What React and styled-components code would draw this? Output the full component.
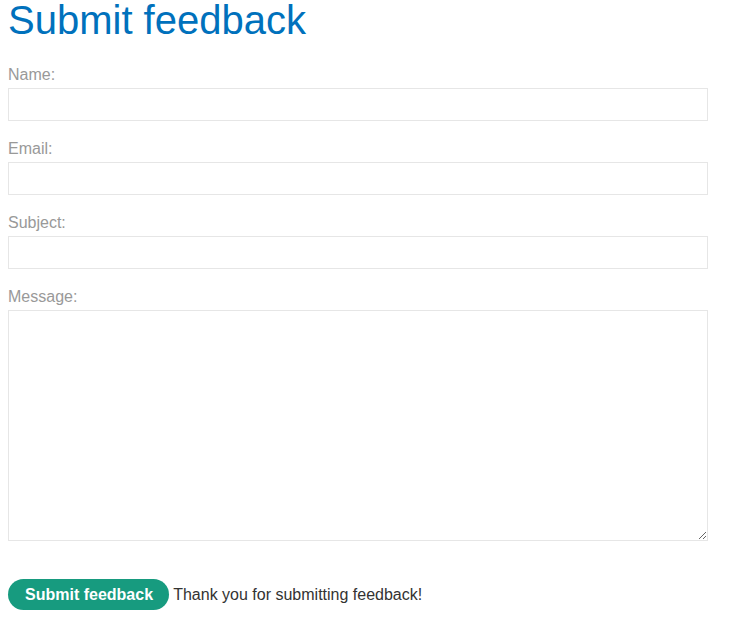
import React from "react";
import styled, { createGlobalStyle } from "styled-components";

const GlobalStyle = createGlobalStyle`
  body {
    margin: 0;
    padding: 0 8px;
    font-family: "Liberation Sans", Arial, sans-serif;
    background: #fff;
  }
`;

const Page = styled.main`
  width: 700px;
`;

const Heading = styled.h1`
  margin: -3px 0 23px 0;
  font-size: 40px;
  line-height: 46px;
  font-weight: 400;
  color: #0071bc;
`;

const Form = styled.form`
  display: flex;
  flex-direction: column;
`;

const Label = styled.label`
  display: block;
  font-size: 16px;
  line-height: 18px;
  color: #999;
  margin-bottom: 4px;
`;

const Input = styled.input`
  box-sizing: border-box;
  display: block;
  width: 700px;
  height: 33px;
  margin: 0 0 19px 0;
  border: 1px solid #e6e6e6;
  background: #fff;
  font-family: inherit;
  font-size: 16px;
  outline: none;
`;

const TextArea = styled.textarea`
  box-sizing: border-box;
  display: block;
  width: 700px;
  height: 231px;
  margin: 0 0 38px 0;
  border: 1px solid #e6e6e6;
  background: #fff;
  font-family: inherit;
  font-size: 16px;
  outline: none;
`;

const Footer = styled.div`
  font-size: 16px;
  color: #333332;
`;

const Button = styled.button`
  box-sizing: border-box;
  height: 31px;
  padding: 0 16px 0 17px;
  border: none;
  border-radius: 16px;
  background: #179b7f;
  color: #fff;
  font-family: inherit;
  font-size: 16px;
  font-weight: 700;
  vertical-align: baseline;
  cursor: pointer;
`;

const fields = [
  { id: "name", label: "Name:" },
  { id: "email", label: "Email:" },
  { id: "subject", label: "Subject:" },
];

export default function App() {
  return (
    <>
      <GlobalStyle />
      <Page>
        <Heading>Submit feedback</Heading>
        <Form onSubmit={(e) => e.preventDefault()}>
          {fields.map((f) => (
            <div key={f.id}>
              <Label htmlFor={f.id}>{f.label}</Label>
              <Input id={f.id} type="text" />
            </div>
          ))}
          <Label htmlFor="message">Message:</Label>
          <TextArea id="message" />
          <Footer>
            <Button type="submit">Submit feedback</Button> Thank you for submitting feedback!
          </Footer>
        </Form>
      </Page>
    </>
  );
}
